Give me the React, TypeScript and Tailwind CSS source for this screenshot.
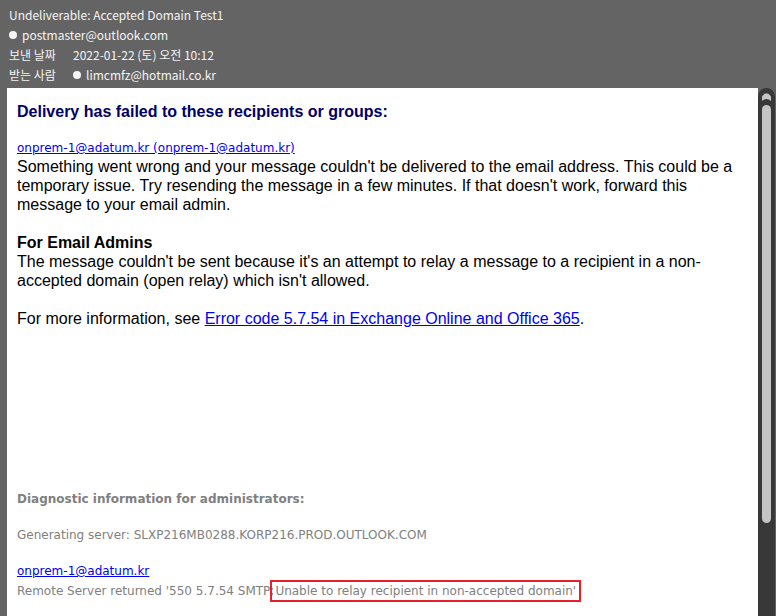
import React from "react";

const HEADER_FONT = { fontFamily: '"Noto Sans CJK KR", "Noto Sans", sans-serif' };

function Dot() {
  return <span className="inline-block w-[8px] h-[8px] rounded-full bg-[#f4f4f4] mr-[5px]" />;
}

function ScrollBar() {
  return (
    <div className="w-[17px] bg-[#383838] rounded-t-[9px] flex flex-col items-center pt-[4px]">
      <svg width="9" height="9" viewBox="0 0 9 9" className="block">
        <path d="M0 9 L0 4.5 Q4.5 -2 9 4.5 L9 9 Q4.5 5 0 9 Z" fill="#c4c4c4" />
      </svg>
      <div className="w-[9px] h-[418px] mt-[4px] rounded-full bg-[#c4c4c4]" />
    </div>
  );
}

export default function App() {
  return (
    <div className="w-[776px] h-[616px] bg-[#646464] overflow-hidden flex flex-col">
      {/* header */}
      <div className="h-[88px] pl-[9px] pt-[5px] text-[12px] leading-[20px] text-[#f4f4f4]" style={HEADER_FONT}>
        <div>Undeliverable: Accepted Domain Test1</div>
        <div className="flex items-center">
          <Dot />
          <span>postmaster@outlook.com</span>
        </div>
        <div className="flex items-center">
          <span className="w-[64px]">보낸 날짜</span>
          <span>2022-01-22 (토) 오전 10:12</span>
        </div>
        <div className="flex items-center">
          <span className="w-[64px]">받는 사람</span>
          <Dot />
          <span>limcmfz@hotmail.co.kr</span>
        </div>
      </div>

      {/* body */}
      <div className="flex flex-1 pl-[7px] pr-[1px] min-h-0">
        <div className="flex-1 bg-white pl-[10px] pr-[16px] pt-[14px] overflow-hidden">
          <div
            className="text-[16px] leading-[19px] text-black"
            style={{ fontFamily: '"Liberation Sans", Arial, sans-serif' }}
          >
            <div className="font-bold text-[#000066]">Delivery has failed to these recipients or groups:</div>
            <div
              className="mt-[19px] text-[12px] leading-[17px]"
              style={{ fontFamily: '"DejaVu Sans", Tahoma, sans-serif' }}
            >
              <a className="text-[#0000ee] underline">onprem-1@adatum.kr (onprem-1@adatum.kr)</a>
            </div>
            <p>
              Something went wrong and your message couldn't be delivered to the email address. This could be a
              temporary issue. Try resending the message in a few minutes. If that doesn't work, forward this
              message to your email admin.
            </p>
            <div className="mt-[19px] font-bold">For Email Admins</div>
            <p>
              The message couldn't be sent because it's an attempt to relay a message to a recipient in a non-
              accepted domain (open relay) which isn't allowed.
            </p>
            <p className="mt-[19px]">
              For more information, see{" "}
              <a className="text-[#0000ee] underline">Error code 5.7.54 in Exchange Online and Office 365</a>.
            </p>
          </div>

          <div
            className="mt-[162px] text-[12px] leading-[18px] text-[#808080]"
            style={{ fontFamily: '"DejaVu Sans", Tahoma, sans-serif' }}
          >
            <div className="font-bold">Diagnostic information for administrators:</div>
            <div className="mt-[18px]">Generating server: SLXP216MB0288.KORP216.PROD.OUTLOOK.COM</div>
            <div className="mt-[18px]">
              <a className="text-[#0000ee] underline">onprem-1@adatum.kr</a>
            </div>
            <div className="whitespace-nowrap">
              Remote Server returned '550 5.7.54 SMTP;
              <span className="inline-block border-2 border-[#e8202a] leading-[18px] px-[3px] -ml-[4px]">
                Unable to relay recipient in non-accepted domain'
              </span>
            </div>
          </div>
        </div>
        <ScrollBar />
      </div>
    </div>
  );
}
